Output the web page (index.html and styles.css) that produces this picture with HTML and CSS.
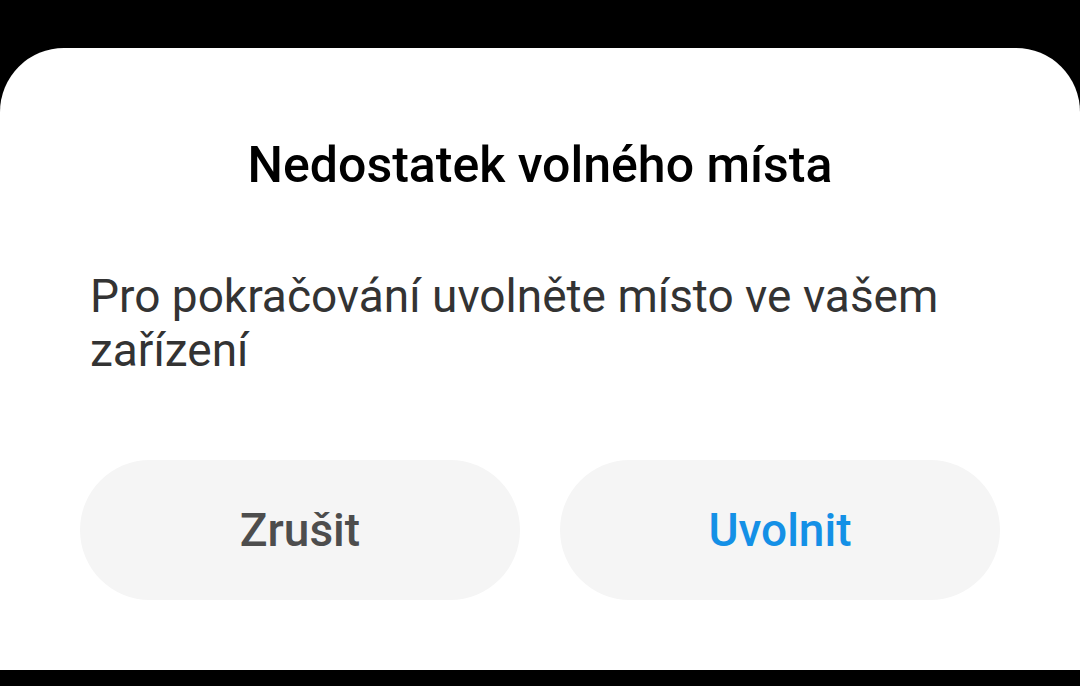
FILE: index.html
```html
<!DOCTYPE html>
<html lang="cs">
<head>
    <meta charset="UTF-8">
    <meta name="viewport" content="width=device-width, initial-scale=1.0">
    <title>Nedostatek volného místa</title>
    <link rel="stylesheet" href="styles.css">
</head>
<body>
    <div class="dialog">
        <h2 class="dialog-title">Nedostatek volného místa</h2>
        <p class="dialog-message">Pro pokračování uvolněte místo ve vašem zařízení</p>
        <div class="dialog-buttons">
            <button class="btn btn-cancel">Zrušit</button>
            <button class="btn btn-ok">Uvolnit</button>
        </div>
    </div>
</body>
</html>
```

FILE: styles.css
```css
/* Dialog over black screen */
body {
    margin: 0;
    background-color: #000;
    font-family: Roboto, "Noto Sans", sans-serif;
    height: 686px;
    overflow: hidden;
}

.dialog {
    margin-top: 48px;
    height: 622px;
    background-color: #fff;
    border-radius: 64px 64px 0 0;
    display: flex;
    flex-direction: column;
}

.dialog-title {
    margin: 0;
    padding-top: 87px;
    text-align: center;
    font-size: 50px;
    line-height: 60px;
    font-weight: 500;
    color: #000;
}

.dialog-message {
    margin: 0;
    padding: 74px 90px 0 90px;
    font-size: 46px;
    line-height: 54px;
    color: #333;
}

.dialog-buttons {
    display: flex;
    gap: 40px;
    padding: 0 80px;
    margin-top: 83px;
}

.btn {
    flex: 1;
    height: 140px;
    border: none;
    border-radius: 70px;
    background-color: #f5f5f5;
    font-family: Roboto, "Noto Sans", sans-serif;
    font-size: 46px;
    font-weight: 500;
    cursor: pointer;
}

.btn-cancel {
    color: #4d4d4d;
}

.btn-ok {
    color: #1490e6;
}
```
